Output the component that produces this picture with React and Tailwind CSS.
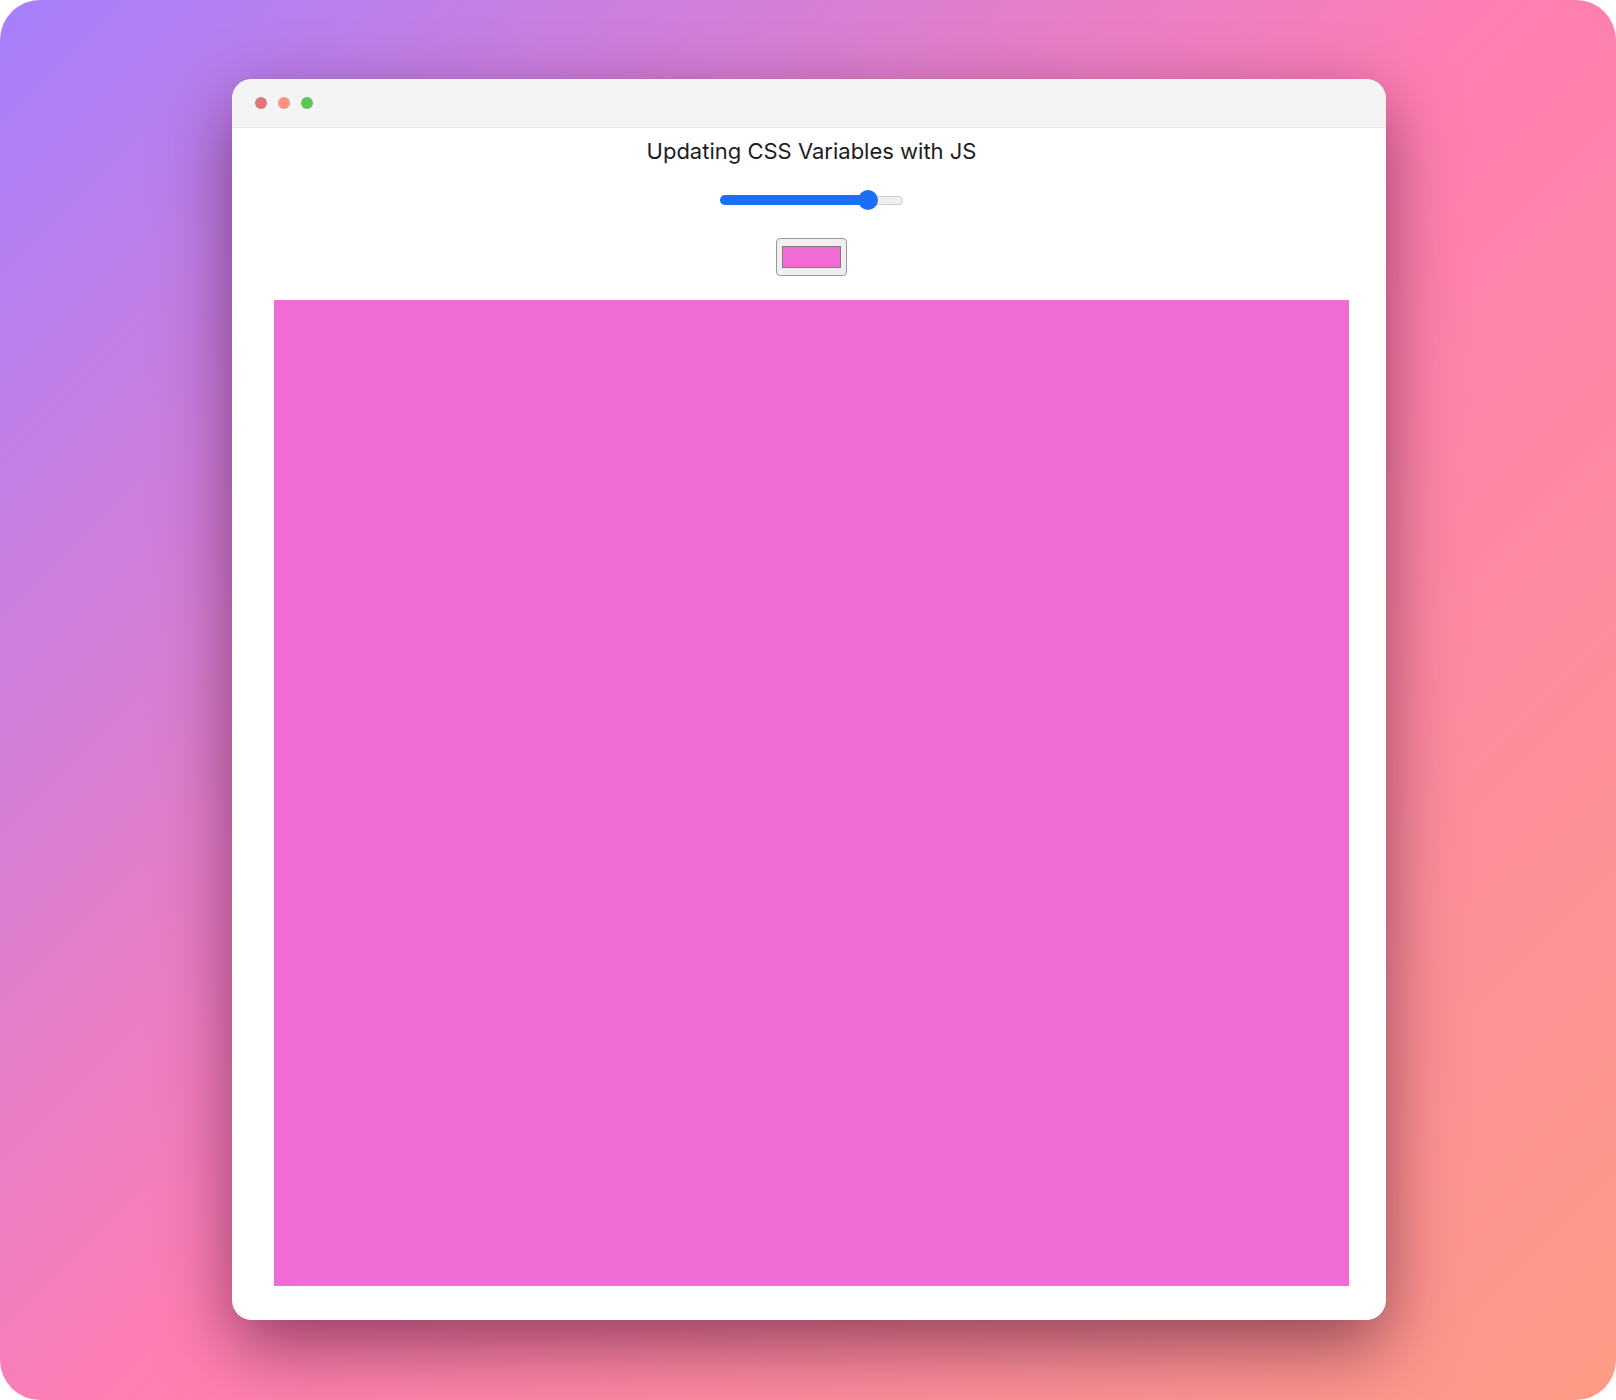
import React from 'react';

const value = 0.845;

const Slider = () => {
    return (
        <div className="relative w-[183px] h-[20px] flex items-center">
            <div className="w-full h-[9px] rounded-full bg-[#efefef] border border-[#cfcfcf]" />
            {/* filled part */}
            <div
                className="absolute left-0 top-1/2 -translate-y-1/2 h-[10px] rounded-full bg-[#1a6ff4]"
                style={{ width: `${value * 163 + 10}px` }}
            />
            <div
                className="absolute top-0 w-[20px] h-[20px] rounded-full bg-[#1a6ff4]"
                style={{ left: `${value * 163}px` }}
            />
        </div>
    );
};

const App = () => {
    return (
        <div className="w-[1616px] h-[1400px] rounded-[40px] overflow-hidden bg-[linear-gradient(135deg,#a67ffd_0%,#ff7eb3_50%,#fd9c85_100%)] pl-[232px] pt-[79px]">
            <div className="w-[1154px] h-[1241px] bg-white rounded-[20px] overflow-hidden shadow-[0_26px_70px_rgba(60,10,40,0.55)] flex flex-col">
                {/* Title bar */}
                <div className="h-[49px] shrink-0 bg-[#f4f4f4] border-b border-[#e6e6e6] flex items-center gap-[11px] pl-[23px]">
                    <span className="w-[12px] h-[12px] rounded-full bg-[#df7878]" />
                    <span className="w-[12px] h-[12px] rounded-full bg-[#fe9181]" />
                    <span className="w-[12px] h-[12px] rounded-full bg-[#5ec453]" />
                </div>

                <div className="flex-1 flex flex-col items-center pl-[42px] pr-[37px] pb-[34px]">
                    <h1 className="mt-[10px] h-[26px] leading-[26px] text-[22px] text-[#1d1d1f] font-['Inter',sans-serif]">
                        Updating CSS Variables with JS
                    </h1>
                    <div className="mt-[26px]">
                        <Slider />
                    </div>
                    <div className="mt-[28px] w-[71px] h-[38px] rounded-[4px] border border-[#9a9a9a] bg-[#efefef] flex items-center justify-center">
                        <div className="w-[59px] h-[22px] border border-[#7d7d7d] bg-[#f06cd4]" />
                    </div>
                    <div className="mt-[24px] w-full flex-1 bg-[#f06cd4]" />
                </div>
            </div>
        </div>
    );
};

export default App;
